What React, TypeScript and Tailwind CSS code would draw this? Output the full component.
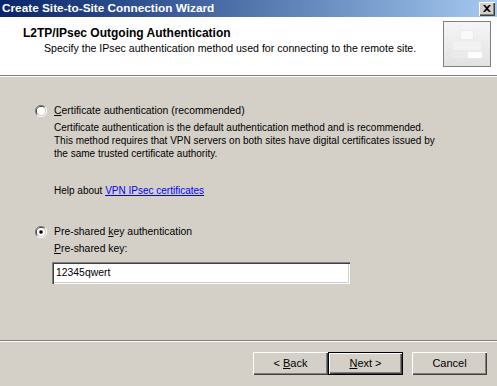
import React from "react";

const FONT = { fontFamily: '"Liberation Sans", Arial, sans-serif' };

function Radio({ checked }: { checked?: boolean }) {
  return (
    <svg width="12" height="12" viewBox="0 0 12 12" className="shrink-0">
      <path d="M10 2 A5.5 5.5 0 0 0 2 10" stroke="#808080" strokeWidth="1" fill="none" />
      <path d="M9.3 2.7 A4.5 4.5 0 0 0 2.7 9.3" stroke="#404040" strokeWidth="1" fill="none" />
      <path d="M2 10 A5.5 5.5 0 0 0 10 2" stroke="#ffffff" strokeWidth="1" fill="none" />
      <path d="M2.7 9.3 A4.5 4.5 0 0 0 9.3 2.7" stroke="#d4d0c8" strokeWidth="1" fill="none" />
      <circle cx="6" cy="6" r="4" fill="#ffffff" />
      {checked && <circle cx="6" cy="6" r="1.8" fill="#000000" />}
    </svg>
  );
}

function Button({ children, focused }: { children: React.ReactNode; focused?: boolean }) {
  return (
    <div
      className={`w-[75px] h-[23px] flex items-center justify-center text-[11px] text-black ${
        focused
          ? "border border-black shadow-[inset_1px_1px_0_#fff,inset_-1px_-1px_0_#404040,inset_-2px_-2px_0_#808080]"
          : "shadow-[inset_1px_1px_0_#fff,inset_-1px_-1px_0_#404040,inset_-2px_-2px_0_#808080]"
      } bg-[#d4d0c8]`}
    >
      {children}
    </div>
  );
}

export default function App() {
  return (
    <div className="w-[497px] h-[386px] bg-[#d4d0c8] flex flex-col overflow-hidden" style={FONT}>
      {/* Caption */}
      <div className="h-[17px] flex items-center justify-between pl-[2px] pr-[2px] bg-gradient-to-r from-[#0a246a] to-[#a6caf0]">
        <span className="text-white font-bold text-[11.8px] leading-none">Create Site-to-Site Connection Wizard</span>
        <div className="w-[16px] h-[14px] bg-[#d4d0c8] flex items-center justify-center shadow-[inset_1px_1px_0_#fff,inset_-1px_-1px_0_#404040,inset_-2px_-2px_0_#808080]">
          <svg width="8" height="7" viewBox="0 0 8 7">
            <path d="M0 0 L2 0 L4 2 L6 0 L8 0 L5 3.5 L8 7 L6 7 L4 5 L2 7 L0 7 L3 3.5 Z" fill="#000" />
          </svg>
        </div>
      </div>

      {/* Header */}
      <div className="h-[59px] bg-white flex justify-between border-b border-[#808080]">
        <div className="pt-[10px] pl-[23px]">
          <div className="text-[12px] font-bold text-black leading-[13px]">L2TP/IPsec Outgoing Authentication</div>
          <div className="text-[10.6px] text-black leading-[13px] pl-[21px] mt-[2px]">
            Specify the IPsec authentication method used for connecting to the remote site.
          </div>
        </div>
        <div className="mt-[4px] mr-[6px] w-[48px] h-[46px] border border-[#808080] bg-gradient-to-b from-[#f6f6f6] to-[#e2e2e2] flex flex-col items-center justify-center gap-[2px]">
          <div className="w-[14px] h-[10px] bg-[#fafafa] border border-[#ececec]" />
          <div className="w-[28px] h-[8px] bg-[#f2f2f2]" />
          <div className="w-[30px] h-[6px] bg-[#ebebeb] flex justify-end">
            <div className="w-[14px] h-[6px] bg-white" />
          </div>
        </div>
      </div>
      <div className="h-px bg-white" />

      {/* Body */}
      <div className="h-[263px] pl-[35px] pt-[27px] text-[10px] text-black">
        <div className="flex items-center gap-[7px] h-[14px]">
          <Radio />
          <span className="text-[10.4px]">
            <span className="underline">C</span>ertificate authentication (recommended)
          </span>
        </div>
        <div className="pl-[19px] mt-[3px] leading-[13px] text-[10px]">
          <div>Certificate authentication is the default authentication method and is recommended.</div>
          <div>This method requires that VPN servers on both sites have digital certificates issued by</div>
          <div>the same trusted certificate authority.</div>
          <div className="mt-[24px]">
            Help about <span className="text-[#0000ff] underline">VPN IPsec certificates</span>
          </div>
        </div>

        <div className="flex items-center gap-[7px] h-[14px] mt-[28px]">
          <Radio checked />
          <span className="text-[10.4px]">
            Pre-shared <span className="underline">k</span>ey authentication
          </span>
        </div>
        <div className="pl-[19px] mt-[3px] text-[10.4px]">
          <div className="leading-[13px]">
            <span className="underline">P</span>re-shared key:
          </div>
          <div className="mt-[7px] w-[298px] h-[22px] -ml-[2px] bg-white flex items-center pl-[4px] shadow-[inset_1px_1px_0_#808080,inset_2px_2px_0_#404040,inset_-1px_-1px_0_#fff,inset_-2px_-2px_0_#d4d0c8]">
            12345qwert
          </div>
        </div>
      </div>

      {/* Footer */}
      <div className="h-px bg-[#808080]" />
      <div className="h-px bg-white" />
      <div className="flex-1 flex items-start justify-end pt-[10px] pr-[10px]">
        <Button>
          &lt;&nbsp;<span className="underline">B</span>ack
        </Button>
        <Button focused>
          <span className="underline">N</span>ext&nbsp;&gt;
        </Button>
        <div className="w-[9px]" />
        <Button>Cancel</Button>
      </div>
    </div>
  );
}
